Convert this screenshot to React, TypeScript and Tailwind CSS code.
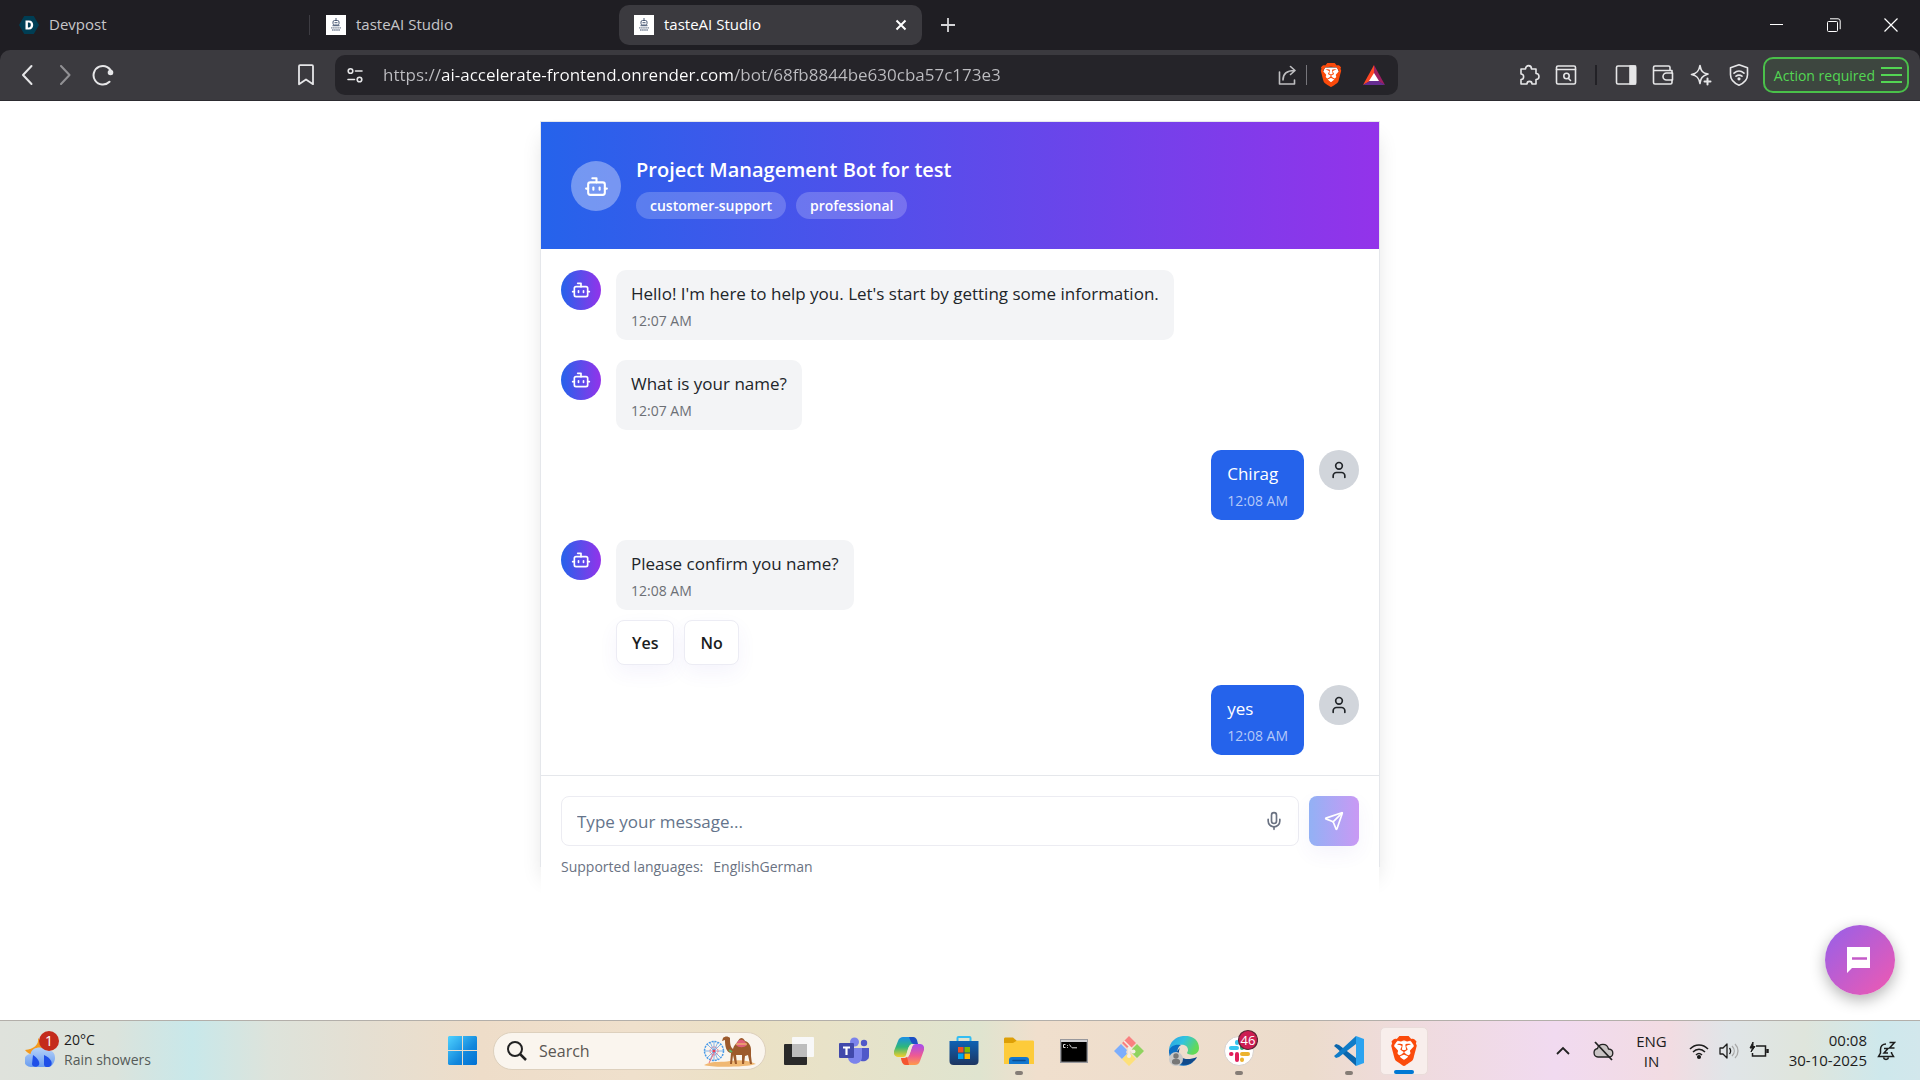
import React, { useState } from 'react';
import { Bot, Mic, Send, User } from 'lucide-react';
import { SiBrave } from 'react-icons/si';

const PAGE_URL = 'https://ai-accelerate-frontend.onrender.com/bot/68fb8844be630cba57c173e3';

interface Message {
    id: number;
    from: 'bot' | 'user';
    text: string;
    time: string;
    options?: string[];
}

const messages: Message[] = [
    { id: 1, from: 'bot', text: "Hello! I'm here to help you. Let's start by getting some information.", time: '12:07 AM' },
    { id: 2, from: 'bot', text: 'What is your name?', time: '12:07 AM' },
    { id: 3, from: 'user', text: 'Chirag', time: '12:08 AM' },
    { id: 4, from: 'bot', text: 'Please confirm you name?', time: '12:08 AM', options: ['Yes', 'No'] },
    { id: 5, from: 'user', text: 'yes', time: '12:08 AM' },
];

/* ---------- Browser icons ---------- */

function DevpostIcon() {
    return (
        <svg className="w-5 h-5 shrink-0" viewBox="0 0 20 20">
            <path d="M5.2 1h9.6L20 10l-5.2 9H5.2L0 10z" fill="#003e54" />
            <path d="M6.5 5.5h3.4c2.8 0 4.3 1.8 4.3 4.5s-1.5 4.5-4.3 4.5H6.5zM8.9 7.6v4.8h.9c1.3 0 2-.8 2-2.4s-.7-2.4-2-2.4z" fill="#fff" />
        </svg>
    );
}

function StudioIcon() {
    return (
        <svg className="w-5 h-5 shrink-0" viewBox="0 0 20 20">
            <rect width="20" height="20" fill="#fff" />
            <g fill="none" stroke="#4b5a75" strokeWidth="1">
                <rect x="7" y="5.5" width="6" height="4.5" rx="1.5" />
                <path d="M10 3v2.500M8.500 7.700h3M6.500 10.700h7" />
            </g>
            <path d="M5 12.800h10M6 15h8" stroke="#7c879a" strokeWidth="1.300" strokeDasharray="1.600 .5" />
        </svg>
    );
}

function BraveIcon({ className }: { className: string }) {
    return (
        <span className={`grid place-items-center ${className}`}>
            <svg className="col-start-1 row-start-1 w-full h-full" viewBox="0 0 24 24">
                <path d="M6 4.5h12l1.8 4-2.4 9L12 21.5l-5.4-4-2.4-9z" fill="#fff" />
            </svg>
            <SiBrave className="col-start-1 row-start-1 w-full h-full text-[#fb4a0b]" />
        </span>
    );
}

interface LineIconProps {
    label: string;
    className?: string;
    children: React.ReactNode;
}

function ToolButton({ label, className = '', children }: LineIconProps) {
    return (
        <button type="button" aria-label={label} className={`shrink-0 text-[#e6e6e8] ${className}`}>
            <svg className="w-[22px] h-[22px]" viewBox="0 0 22 22" fill="none" stroke="currentColor" strokeWidth="1.6" strokeLinecap="round" strokeLinejoin="round">
                {children}
            </svg>
        </button>
    );
}

/* ---------- Browser chrome ---------- */

function TabStrip() {
    return (
        <div className="flex h-[50px] items-center bg-[#1f1e23] text-[15px] leading-5 text-[#c6c6c9]">
            <button type="button" className="flex w-[309px] h-10 items-center gap-[10px] pl-[19px]">
                <DevpostIcon />
                <span className="pb-[2px]">Devpost</span>
            </button>
            <div className="h-5 w-px bg-[#3d3c42]" />
            <button type="button" className="flex w-[309px] h-10 items-center gap-[10px] pl-4">
                <StudioIcon />
                <span className="pb-[2px]">tasteAI Studio</span>
            </button>
            <div className="flex w-[303px] h-10 items-center rounded-[10px] bg-[#3b3a3f] pl-[15px] pr-[13px] text-white">
                <button type="button" className="flex flex-1 items-center gap-[10px]">
                    <StudioIcon />
                    <span className="pb-[2px]">tasteAI Studio</span>
                </button>
                <button type="button" aria-label="Close tab">
                    <svg className="w-4 h-4" viewBox="0 0 16 16" stroke="#fff" strokeWidth="2">
                        <path d="M3.5 3.5l9 9M12.5 3.5l-9 9" />
                    </svg>
                </button>
            </div>
            <button type="button" aria-label="New tab" className="ml-[18px]">
                <svg className="w-4 h-4" viewBox="0 0 16 16" stroke="#d5d5d8" strokeWidth="1.8">
                    <path d="M8 1v14M1 8h14" />
                </svg>
            </button>

            {/* Window controls */}
            <div className="ml-auto flex items-center gap-[43px] pr-[22px]">
                <button type="button" aria-label="Minimize">
                    <svg className="w-[14px] h-[14px]" viewBox="0 0 14 14" stroke="#fff">
                        <path d="M0 6.5h13" />
                    </svg>
                </button>
                <button type="button" aria-label="Restore">
                    <svg className="w-[14px] h-[14px]" viewBox="0 0 14 14" fill="none" stroke="#fff">
                        <rect x=".5" y="3.5" width="10" height="10" rx="1" />
                        <path d="M3 .8h8a2.2 2.2 0 0 1 2.2 2.2v8.2" />
                    </svg>
                </button>
                <button type="button" aria-label="Close window">
                    <svg className="w-[14px] h-[14px]" viewBox="0 0 14 14" stroke="#fff" strokeWidth="1.2">
                        <path d="M.5.5l13 13M13.500.5l-13 13" />
                    </svg>
                </button>
            </div>
        </div>
    );
}

function Toolbar() {
    const [url, setUrl] = useState(PAGE_URL);

    return (
        <div className="bg-[#1f1e23]">
            <div className="flex h-[51px] items-center rounded-t-[10px] border-b border-[#2c2b30] bg-[#3b3a3f]">
                <ToolButton label="Back" className="ml-4">
                    <path d="M15.500 2L7 11l8.500 9" strokeWidth="2" />
                </ToolButton>
                <ToolButton label="Forward" className="ml-4 opacity-50">
                    <path d="M7 2l8.500 9L7 20" strokeWidth="2" />
                </ToolButton>
                <ToolButton label="Reload" className="ml-4">
                    <path d="M20 9.500A9.300 9.300 0 1 0 17.500 17.800" strokeWidth="2" />
                    <circle cx="18.500" cy="8.500" r="2" fill="currentColor" />
                </ToolButton>
                <ToolButton label="Bookmark this page" className="ml-[181px]">
                    <path d="M5 1.200h12a1 1 0 0 1 1 1v18L11 15.500l-7 4.700v-18a1 1 0 0 1 1-1z" strokeWidth="1.800" />
                </ToolButton>

                {/* Address bar */}
                <div className="ml-[18px] flex h-10 min-w-0 flex-1 items-center rounded-[10px] bg-[#252429] pl-[9px] pr-3">
                    <ToolButton label="Site information">
                        <circle cx="6.500" cy="7" r="2.300" />
                        <path d="M11.500 7H18M4 15.500h6.500" />
                        <circle cx="15.500" cy="15.500" r="2.300" />
                    </ToolButton>
                    {/* The host is brighter than the scheme and the path */}
                    <input
                        type="text"
                        aria-label="Address"
                        value={url}
                        onChange={(e) => setUrl(e.target.value)}
                        className="ml-[17px] min-w-0 flex-1 bg-[linear-gradient(90deg,#bdbdc1_58px,#ffffff_58px,#ffffff_351px,#bdbdc1_351px)] bg-clip-text text-[17px] text-transparent outline-none"
                    />
                    <ToolButton label="Share" className="opacity-80">
                        <path d="M3.500 8v12h15v-4" />
                        <path d="M7 16c0-6 4-9.500 11.500-9.500M14.500 2.500l4.500 4-4.500 4" />
                    </ToolButton>
                    <div className="ml-2 h-5 w-px bg-[#77767b]" />
                    <button type="button" aria-label="Brave Shields" className="ml-3">
                        <BraveIcon className="w-6 h-6" />
                    </button>
                    <button type="button" aria-label="Brave Rewards" className="ml-[19px]">
                        <svg className="w-6 h-6" viewBox="0 0 24 24">
                            <path d="M12 2L1 22l7.500-4L12 11z" fill="#ff4724" />
                            <path d="M12 2l11 20-7.500-4L12 11z" fill="#9e1f63" />
                            <path d="M1 22h22l-7.500-4.500h-7z" fill="#662d91" />
                            <path d="M12 10l5 8H7z" fill="#fff" />
                        </svg>
                    </button>
                </div>

                {/* Extensions and side panels */}
                <div className="ml-[120px] flex items-center">
                    <ToolButton label="Extensions">
                        <path d="M3 5h4.500c0-4.500 6-4.500 6 0H18v4.500c4 0 4 6 0 6V20h-4c0-3.500-5-3.500-5 0H3v-4.500c3.500 0 3.500-5.500 0-5.500z" />
                    </ToolButton>
                    <ToolButton label="Search page" className="ml-[15px]">
                        <rect x="1.500" y="2" width="19" height="18" rx="1.500" />
                        <path d="M1.500 5.500h19M13.500 14.500l2 2" />
                        <circle cx="11.500" cy="12" r="2.700" />
                    </ToolButton>
                    <div className="mx-[18px] h-5 w-[2px] bg-[#222126]" />
                    <ToolButton label="Side panel">
                        <rect x="1.500" y="2" width="19" height="18" rx="1.500" />
                        <path d="M15 2h5.500v18H15z" fill="currentColor" />
                    </ToolButton>
                    <ToolButton label="Wallet" className="ml-[15px]">
                        <path d="M20 9V6.500H1.500M18 6V3.500a1.500 1.500 0 0 0-1.500-1.500H3a1.500 1.500 0 0 0-1.500 1.500v15A1.500 1.500 0 0 0 3 20h15.500a1.500 1.500 0 0 0 1.500-1.500V16" />
                        <path d="M20.500 9h-6a3.500 3.500 0 0 0 0 7h6z" />
                    </ToolButton>
                    <ToolButton label="Leo AI" className="ml-4">
                        <path d="M10 1.500c1 5.500 2.500 7.500 8 8.500-2.500.8-4.500 1.500-6 3.500s-1.500 3.500-2 6c-1-5.500-3-8-8.500-9 5.500-1 7.500-3.500 8.500-9z" />
                        <path d="M17.500 14.500v6M14.500 17.500h6" strokeWidth="2" />
                    </ToolButton>
                    <ToolButton label="VPN" className="ml-4">
                        <path d="M11 .8l8.500 3v7c0 5-4 8.500-8.500 10.400C6.500 19.300 2.500 15.800 2.500 10.800v-7z" />
                        <path d="M6 9.200c3-2.600 7-2.600 10 0M8 12.200c2-1.500 4-1.500 6 0" />
                        <circle cx="11" cy="14.800" r=".8" fill="currentColor" />
                    </ToolButton>
                    <button
                        type="button"
                        className="ml-[13px] mr-[11px] flex h-9 items-center gap-[6px] rounded-[10px] border-2 border-[#4ac04a] bg-[#3d463f] pl-[9px] pr-[5px] text-[14px] whitespace-nowrap text-[#53d653]"
                    >
                        Action required
                        <svg className="w-[21px] h-[18px]" viewBox="0 0 21 18" stroke="currentColor" strokeWidth="2">
                            <path d="M0 2h21M0 9h21M0 16h21" />
                        </svg>
                    </button>
                </div>
            </div>
        </div>
    );
}

/* ---------- Chat ---------- */

function ChatMessage({ message }: { message: Message }) {
    if (message.from === 'user') {
        return (
            <div className="flex items-start justify-end gap-[15px]">
                <div className="rounded-[10px] bg-[#2563eb] px-4 pt-3 pb-[9px] text-white">
                    <p className="text-[17px] leading-6">{message.text}</p>
                    <p className="mt-[5px] text-[14px] leading-5 text-[#b5c9f8]">{message.time}</p>
                </div>
                <div className="flex w-10 h-10 shrink-0 items-center justify-center rounded-full bg-[#d1d5db]">
                    <User className="w-5 h-5 text-[#212529]" />
                </div>
            </div>
        );
    }

    return (
        <div className="flex items-start gap-[15px]">
            <div className="flex w-10 h-10 shrink-0 items-center justify-center rounded-full bg-[linear-gradient(90deg,#2563eb,#9333ea)]">
                <Bot className="w-5 h-5 text-white" />
            </div>
            <div>
                <div className="w-fit rounded-[10px] bg-[#f3f4f6] px-[15px] pt-3 pb-[9px]">
                    <p className="text-[17px] leading-6 text-[#212529]">{message.text}</p>
                    <p className="mt-[5px] text-[14px] leading-5 text-[#6c6f75]">{message.time}</p>
                </div>
                {message.options && (
                    <div className="mt-[10px] flex gap-[10px]">
                        {message.options.map((option) => (
                            <button
                                key={option}
                                type="button"
                                className="h-[45px] rounded-[8px] border border-[#ececf4] bg-white px-[15px] text-[16px] font-semibold text-[#1a1d21] shadow-[0_8px_20px_rgba(80,60,200,0.06)]"
                            >
                                {option}
                            </button>
                        ))}
                    </div>
                )}
            </div>
        </div>
    );
}

function ChatCard() {
    const [text, setText] = useState('');

    return (
        <div className="mx-auto w-full max-w-[840px] border border-gray-200 bg-white shadow-[0_14px_20px_-3px_rgba(0,0,0,0.12)]">
            {/* Header */}
            <header className="flex items-center gap-[15px] bg-[linear-gradient(90deg,#2563eb,#9333ea)] px-[30px] pt-[31px] pb-[30px] text-white">
                <div className="flex w-[50px] h-[50px] shrink-0 items-center justify-center rounded-full bg-white/35">
                    <Bot className="w-[25px] h-[25px]" />
                </div>
                <div>
                    <h1 className="text-[20px] leading-[34px] font-semibold">Project Management Bot for test</h1>
                    <div className="mt-[5px] flex gap-[10px]">
                        <span className="rounded-full bg-white/20 px-[14px] pt-px text-[14px] leading-[26px] font-semibold">customer-support</span>
                        <span className="rounded-full bg-white/20 px-[14px] pt-px text-[14px] leading-[26px] font-semibold">professional</span>
                    </div>
                </div>
            </header>

            {/* Conversation */}
            <div className="flex flex-col gap-5 px-5 pt-[21px] pb-5">
                {messages.map((message) => (
                    <ChatMessage key={message.id} message={message} />
                ))}
            </div>

            {/* Composer, runs past the bottom edge of the card */}
            <form onSubmit={(e) => e.preventDefault()} className="-mb-8 border-t border-gray-200 bg-white px-5 pt-5 pb-5">
                <div className="flex gap-[10px]">
                    <div className="flex h-[50px] min-w-0 flex-1 items-center rounded-[8px] border border-[#ececf2] pl-[15px] pr-[14px]">
                        <input
                            type="text"
                            aria-label="Message"
                            value={text}
                            onChange={(e) => setText(e.target.value)}
                            placeholder="Type your message..."
                            className="min-w-0 flex-1 pt-[2px] text-[17px] text-gray-800 outline-none placeholder:text-[#64748b]"
                        />
                        <button type="button" aria-label="Voice input">
                            <Mic className="w-5 h-5 text-gray-500" />
                        </button>
                    </div>
                    <button
                        type="submit"
                        aria-label="Send"
                        className="flex w-[50px] h-[50px] shrink-0 items-center justify-center rounded-[8px] bg-[linear-gradient(90deg,#92b1f5,#c999f4)] text-white shadow-[0_8px_20px_rgba(80,60,200,0.06)]"
                    >
                        <Send className="w-5 h-5" />
                    </button>
                </div>
                <p className="mt-[10px] flex gap-[10px] text-[14px] leading-[22px] text-gray-500">
                    <span>Supported languages:</span>
                    <span>EnglishGerman</span>
                </p>
            </form>
        </div>
    );
}

/* ---------- Taskbar ---------- */

function WeatherIcon() {
    return (
        <svg className="w-[34px] h-10 shrink-0" viewBox="0 0 34 40">
            <defs>
                <linearGradient id="cloud" x1="0" y1="0" x2="0" y2="1">
                    <stop offset="0" stopColor="#b6d2f8" />
                    <stop offset="1" stopColor="#6a9df0" />
                </linearGradient>
            </defs>
            <path d="M13 7c1 7-4 11-13 12 3 4 8 6 13 4 6-2 7-10 0-16z" fill="#f39a1e" />
            <path d="M6 36a6.500 6.500 0 0 1-.5-13C7 15 19 15 22 20c6-1 8 3 8 7s-3 9-7 9z" fill="url(#cloud)" />
            <path d="M8 24c6 4 7 8 6 10-2 3-7 2-7-1zM19 24c7 3 9 8 7 10.500s-7 2-7-1z" fill="#1f4fe8" />
            <circle cx="24" cy="10" r="10" fill="#c42b1c" />
            <text x="24" y="15" textAnchor="middle" fontSize="14" fill="#fff">1</text>
        </svg>
    );
}

function StartIcon() {
    return (
        <svg className="w-[29px] h-[29px]" viewBox="0 0 29 29">
            <defs>
                <linearGradient id="win" x1="0" y1="0" x2="1" y2="1">
                    <stop offset="0" stopColor="#4fd2ff" />
                    <stop offset=".6" stopColor="#1287dc" />
                    <stop offset="1" stopColor="#0071d4" />
                </linearGradient>
            </defs>
            <path d="M1 0h13v14H0V1zM15 0h13l1 1v13H15zM0 15h14v14H1l-1-1zM15 15h14v13l-1 1H15z" fill="url(#win)" />
        </svg>
    );
}

function CamelArt() {
    return (
        <svg className="w-[54px] h-8 shrink-0" viewBox="0 0 54 32">
            <path d="M1 30c10-5 18-2 26-4 10-2 20 0 26 3-8 3-45 4-52 1z" fill="#f0b873" />
            <g stroke="#4b9be8" fill="none">
                <circle cx="11" cy="16" r="9.500" strokeDasharray="2 1" strokeWidth="1.500" />
                <path d="M11 6v20M1 16h20M4 9l14 14M18 9L4 23M7 7l8 18M15 7L7 25" strokeWidth=".7" />
            </g>
            <circle cx="11" cy="16" r="4" fill="none" stroke="#ef6a7f" strokeDasharray="1.500 1" />
            <circle cx="11" cy="16" r="1.600" fill="#e8405a" />
            <path d="M11 18l-5 10" stroke="#ef6a7f" />
            <path d="M20 3c2-2 5-2 7 0 0 4 0 9 3 11 1-4 3-5 5-8 2-4 5-4 7 0 4 1 6 5 6 9v6l1 8h-2l-2-9-3 1-1 8h-2v-9h-6l1 9h-2l-2-9-1 9h-2l1-11c-5-1-6-7-6-13l-3 1z" fill="#9c5a2c" />
            <path d="M33 10c2-7 8-7 11 0-3 3-8 3-11 0z" fill="#e0607a" />
            <path d="M33 9l11 0" stroke="#f5cf6a" />
            <path d="M26 15l3 2" stroke="#5bb56a" strokeWidth="2" />
        </svg>
    );
}

function TaskViewIcon() {
    return (
        <svg className="w-[30px] h-[30px]" viewBox="0 0 30 30">
            <rect x="0" y="8" width="23" height="21" rx="1" fill="#2a2a2a" />
            <rect x="8" y="1" width="22" height="20" rx="1" fill="#f8f8f8" />
            <path d="M8 8h15v13H8z" fill="#bdbdbd" />
        </svg>
    );
}

function TeamsIcon() {
    return (
        <svg className="w-[30px] h-[30px]" viewBox="0 0 30 30">
            <circle cx="15.500" cy="6" r="4.500" fill="#7b83eb" />
            <circle cx="25" cy="7" r="3.200" fill="#5059c9" />
            <path d="M21 12h9v8c0 4-4 6-8 5z" fill="#5059c9" />
            <path d="M9 12h14v9c0 9-14 9-14 0z" fill="#7b83eb" />
            <rect x="0" y="7" width="15" height="15" rx="1" fill="#4149ab" />
            <path d="M4 10.500h7v2H8.600V19H6.400v-6.500H4z" fill="#fff" />
        </svg>
    );
}

function CopilotIcon() {
    return (
        <svg className="w-[30px] h-[30px]" viewBox="0 0 30 30">
            <defs>
                <linearGradient id="cpA" x1="0" y1="0" x2="0" y2="1">
                    <stop offset="0" stopColor="#1b8fe6" />
                    <stop offset=".5" stopColor="#2fb77a" />
                    <stop offset="1" stopColor="#f5cf2a" />
                </linearGradient>
                <linearGradient id="cpB" x1="0" y1="0" x2="0" y2="1">
                    <stop offset="0" stopColor="#a44cf0" />
                    <stop offset=".55" stopColor="#ee5a93" />
                    <stop offset="1" stopColor="#ff9b4a" />
                </linearGradient>
            </defs>
            <path d="M9 1h9c2 0 3 1 4 3l1 4h-4c-3 0-4 2-5 5l-2 6c-1 2-2 2-4 2H4c-3 0-5-3-4-6L4 5c1-3 3-4 5-4z" fill="url(#cpA)" />
            <path d="M15 1h4c2 0 3 1 4 3l1 4h-5l-2-2z" fill="#1b4fc4" />
            <path d="M21 29h-9c-2 0-3-1-4-3l-1-4h4c3 0 4-2 5-5l2-6c1-2 2-3 4-3h4c3 0 5 3 4 6l-4 11c-1 3-3 4-5 4z" fill="url(#cpB)" />
            <path d="M7 22h4l2-1 2 8h-3c-2 0-3-1-4-3z" fill="#f4552f" />
            <path d="M14 13c1-3 2-5 5-5l-3 9c-1 3-2 4-4 4z" fill="#f2e7d0" />
        </svg>
    );
}

function StoreIcon() {
    return (
        <svg className="w-[30px] h-[30px]" viewBox="0 0 30 30">
            <defs>
                <linearGradient id="store" x1="0" y1="0" x2="0" y2="1">
                    <stop offset="0" stopColor="#0e62b4" />
                    <stop offset="1" stopColor="#1d3561" />
                </linearGradient>
            </defs>
            <path d="M8.500 6V2c0-.6.400-1 1-1h11c.6 0 1 .4 1 1v4" fill="none" stroke="#33bdf2" strokeWidth="2" />
            <path d="M.500 5h29v20a4 4 0 0 1-4 4h-21a4 4 0 0 1-4-4z" fill="url(#store)" />
            <path d="M9 11h5.500v5.500H9z" fill="#f25022" />
            <path d="M15.500 11H21v5.500h-5.500z" fill="#7fba00" />
            <path d="M9 17.500h5.500V23H9z" fill="#00a4ef" />
            <path d="M15.500 17.500H21V23h-5.500z" fill="#ffb900" />
        </svg>
    );
}

function ExplorerIcon() {
    return (
        <svg className="w-[30px] h-[30px]" viewBox="0 0 30 30">
            <path d="M0 3c0-1 .5-1.500 1.500-1.500H9L13 5v6H0z" fill="#dd9f07" />
            <path d="M0 7h9l4-2.500h15.500c1 0 1.500.5 1.500 1.500v22H0z" fill="#fdcb3a" />
            <path d="M5 28v-4c0-2 1-3 3-3h14c2 0 3 1 3 3v4z" fill="#1277cf" />
            <path d="M9 24.500h12" stroke="#0b4d92" strokeWidth="1.500" strokeLinecap="round" />
        </svg>
    );
}

function TerminalIcon() {
    return (
        <svg className="w-[28px] h-[24px]" viewBox="0 0 28 24">
            <rect x=".7" y=".7" width="26.600" height="22.600" fill="#000" stroke="#98989c" strokeWidth="1.400" />
            <path d="M1 2h26" stroke="#cfcfd2" strokeWidth="2" />
            <path d="M5.500 5.500H3.500v3h2M7.500 6v.8M7.500 8v.8M9.500 5.500l2 3M12 8.800h5" stroke="#d8d8d8" fill="none" />
        </svg>
    );
}

function GitIcon() {
    return (
        <svg className="w-[30px] h-[30px]" viewBox="0 0 30 30">
            <path d="M15 0l7 7-5 5-2-2-2 2-5-5z" fill="#f98080" />
            <path d="M7 8l6 6-1 2 1 2-5 5-8-8z" fill="#7daefc" />
            <path d="M23 8l7 7-7 7-5-5 1-2-1-2z" fill="#8fd35f" />
            <path d="M15 19l2-1 5 5-7 7-7-7 5-5z" fill="#fde07a" />
            <path d="M10 5l8 8M15 11v10M15 13l4 3" stroke="#f5eee6" strokeWidth="1.500" />
            <circle cx="15" cy="20" r="2" fill="#f5eee6" />
            <circle cx="19.500" cy="15.500" r="2" fill="#f5eee6" />
        </svg>
    );
}

function EdgeIcon() {
    return (
        <svg className="w-[30px] h-[30px]" viewBox="0 0 30 30">
            <defs>
                <linearGradient id="edge" x1="0" y1="0" x2="1" y2=".4">
                    <stop offset="0" stopColor="#2b9ee6" />
                    <stop offset=".5" stopColor="#31c3df" />
                    <stop offset="1" stopColor="#63d957" />
                </linearGradient>
            </defs>
            <path d="M0 14C1-4 30-5 30 12c0 6-6 8-11 6-2-1 0-2 0-4 0-5-5-6-9-5-5 1-10 4-10 5z" fill="url(#edge)" />
            <path d="M0 14c2-5 8-6 12-5-5 3-5 11 0 15 3 3 8 3 12 2-8 8-25 3-24-12z" fill="#0c6fc4" />
            <path d="M11 12c-4 7 3 15 17 9-3 7-13 10-18 6-5-5-3-12 1-15z" fill="#114a8b" />
            <circle cx="7" cy="23" r="7" fill="#c9c9c9" />
            <circle cx="7" cy="20" r="2.700" fill="#777" />
            <path d="M3 25c0-3 8-3 8 0v2c-2 2-6 2-8 0z" fill="#777" />
        </svg>
    );
}

function SlackIcon() {
    return (
        <svg className="w-[38px] h-[44px]" viewBox="0 0 38 44">
            <circle cx="19" cy="22" r="14.500" fill="#fff" stroke="#d8d1cc" />
            <g strokeWidth="4" strokeLinecap="round">
                <path d="M11 19h6M17 13v1" stroke="#36c5f0" />
                <path d="M22 13v6M27 19h.5" stroke="#2eb67d" />
                <path d="M17 25v6M11 25h.5" stroke="#e01e5a" />
                <path d="M22 25h6M22 31v-.5" stroke="#ecb22e" />
            </g>
            <circle cx="28" cy="11" r="9.500" fill="#cd1d52" stroke="#5a2433" strokeWidth="1.200" />
            <text x="28" y="16" textAnchor="middle" fontSize="13" fill="#fff">46</text>
        </svg>
    );
}

function VsCodeIcon() {
    return (
        <svg className="w-[30px] h-[30px]" viewBox="0 0 30 30">
            <path d="M22 30L3 12.500l-3-2.500 2-2 3 1L22 22z" fill="#0a66ad" />
            <path d="M22 0L3 17.500l-3 2.500 2 2 3-1L22 8z" fill="#0f7cc8" />
            <path d="M22 0l8 3v24l-8 3z" fill="#2ba3f0" />
        </svg>
    );
}

interface TaskbarAppProps {
    label: string;
    running?: boolean;
    active?: boolean;
    children: React.ReactNode;
}

function TaskbarApp({ label, running, active, children }: TaskbarAppProps) {
    return (
        <button
            type="button"
            aria-label={label}
            className={`relative flex w-12 h-12 shrink-0 items-center justify-center rounded-[5px] ${
                active ? 'border border-[#eadcda] bg-[#f8eeec]' : ''
            }`}
        >
            {children}
            {running && (
                <span className={`absolute bottom-0 left-1/2 h-1 -translate-x-1/2 rounded-full ${active ? 'w-5 bg-[#0078d4]' : 'w-2 bg-[#857d76]'}`} />
            )}
        </button>
    );
}

function Taskbar() {
    return (
        <footer className="flex h-[60px] items-center border-t border-[#b3afaa] bg-[linear-gradient(90deg,#dfe2dc_0%,#dbe3dc_6%,#c8e8ea_10%,#dde3db_14%,#e5dfd2_19%,#eeddc9_25%,#efe0cc_33%,#ebe1c5_39%,#e8e2c8_43%,#dfe4cf_51%,#f0dfcd_54%,#ecdccc_68%,#efdbdc_73%,#f1daf0_81%,#f2dce2_87%,#e0e5e8_90%,#dfe5dc_94%,#cee8ec_98%,#d2e7ec_100%)] text-[15px] leading-5 text-[#1c1c1c]">
            {/* Weather */}
            <div className="flex flex-1 items-center">
                <button type="button" className="ml-[25px] flex items-center gap-[5px] text-left">
                    <WeatherIcon />
                    <span className="pb-[2px] text-[14px]">
                        <span className="block">20°C</span>
                        <span className="block text-[#555b58]">Rain showers</span>
                    </span>
                </button>
            </div>

            {/* Pinned apps */}
            <div className="mr-[30px] flex items-center gap-[7px]">
                <TaskbarApp label="Start"><StartIcon /></TaskbarApp>
                <label className="mr-[2px] flex h-[38px] w-[273px] items-center rounded-full border border-[#ddd0bd] bg-[#faf5ee] pl-[13px] pr-2">
                    <svg className="w-[20px] h-[20px] shrink-0" viewBox="0 0 20 20" fill="none" stroke="#222" strokeWidth="2">
                        <circle cx="8" cy="8" r="7" />
                        <path d="M13 13l6 6" strokeWidth="2.500" />
                    </svg>
                    <input type="text" aria-label="Search" placeholder="Search" className="ml-3 min-w-0 flex-1 text-[16px] outline-none placeholder:text-[#5b5753]" />
                    <CamelArt />
                </label>
                <TaskbarApp label="Task view"><TaskViewIcon /></TaskbarApp>
                <TaskbarApp label="Teams"><TeamsIcon /></TaskbarApp>
                <TaskbarApp label="Copilot"><CopilotIcon /></TaskbarApp>
                <TaskbarApp label="Microsoft Store"><StoreIcon /></TaskbarApp>
                <TaskbarApp label="File Explorer" running><ExplorerIcon /></TaskbarApp>
                <TaskbarApp label="Command Prompt"><TerminalIcon /></TaskbarApp>
                <TaskbarApp label="Git"><GitIcon /></TaskbarApp>
                <TaskbarApp label="Edge"><EdgeIcon /></TaskbarApp>
                <TaskbarApp label="Slack" running><SlackIcon /></TaskbarApp>
                <div className="w-12" />
                <TaskbarApp label="Visual Studio Code" running><VsCodeIcon /></TaskbarApp>
                <TaskbarApp label="Brave" running active><BraveIcon className="w-[30px] h-[30px]" /></TaskbarApp>
            </div>

            {/* System tray */}
            <div className="flex flex-1 items-center justify-end pr-[24px] text-[15px]">
                <button type="button" aria-label="Show hidden icons">
                    <svg className="w-[14px] h-[14px]" viewBox="0 0 14 14" fill="none" stroke="#222" strokeWidth="1.800">
                        <path d="M1 10l6-6 6 6" />
                    </svg>
                </button>
                <button type="button" aria-label="OneDrive" className="ml-[23px]">
                    <svg className="w-[21px] h-[20px]" viewBox="0 0 21 20" stroke="#222" strokeWidth="1.300">
                        <path d="M5 16a4.300 4.300 0 0 1-.5-8.500C6 2 14 2 15.500 8c6 .5 5.500 8 0 8z" fill="#c9c4c4" />
                        <path d="M2 1l17 18" strokeWidth="1.800" />
                    </svg>
                </button>
                <button type="button" className="ml-[22px] text-center">
                    <span className="block">ENG</span>
                    <span className="block">IN</span>
                </button>
                <button type="button" aria-label="Network, volume and battery" className="ml-[22px] flex gap-[10px]">
                    <svg className="w-5 h-5" viewBox="0 0 20 20" fill="none" stroke="#1c1c1c" strokeWidth="1.500">
                        <path d="M1 8c5-5.500 13-5.500 18 0M4 11c3.500-3.700 8.500-3.700 12 0M7 14c2-2 4-2 6 0" />
                        <circle cx="10" cy="16" r="1.300" fill="#1c1c1c" />
                    </svg>
                    <svg className="w-5 h-5" viewBox="0 0 20 20" fill="none" stroke="#1c1c1c" strokeWidth="1.300">
                        <path d="M1 7h3l4-4v14l-4-4H1z" strokeLinejoin="round" />
                        <path d="M10.500 7c1.500 2 1.500 4 0 6" />
                        <path d="M13 5c3 3 3 7 0 10M16 3c4 4 4 10 0 14" stroke="#a9a9a9" />
                    </svg>
                    <svg className="w-5 h-5" viewBox="0 0 20 20" fill="none" stroke="#1c1c1c" strokeWidth="1.500">
                        <path d="M7 5h9.500v10H3.500v-3" />
                        <path d="M18.500 8v4" strokeWidth="2.500" />
                        <path d="M4 1L1 7h2.500L2 11l4-5.500H4z" fill="#1c1c1c" strokeWidth="1" />
                    </svg>
                </button>
                <button type="button" className="ml-5 flex items-center gap-[10px]">
                    <span className="pb-[2px] text-right">
                        <span className="block">00:08</span>
                        <span className="block">30-10-2025</span>
                    </span>
                    <svg className="w-[19px] h-[20px]" viewBox="0 0 19 20" fill="none" stroke="#1c1c1c" strokeWidth="1.500">
                        <path d="M9 3c-3.500 0-5.500 2.500-5.500 5.500V12L1.500 15.500h15L14.500 12v-1M6.500 16.500c.5 2.500 4.500 2.500 5 0" />
                        <path d="M12.500 1.500h5l-5 5.500h5M7 7.500h4L7 12h4" />
                    </svg>
                </button>
            </div>
        </footer>
    );
}

export default function App() {
    return (
        <div className="flex min-h-screen flex-col bg-white font-['Open_Sans','Noto_Sans',sans-serif]">
            <TabStrip />
            <Toolbar />
            <main className="flex-1 px-5 pt-5 pb-8">
                <ChatCard />
            </main>

            {/* Floating help button */}
            <button
                type="button"
                aria-label="Open support chat"
                className="fixed right-[25px] bottom-[85px] flex w-[70px] h-[70px] items-center justify-center rounded-full bg-[linear-gradient(135deg,#9560ea,#f159b0)] shadow-[0_5px_15px_rgba(0,0,0,0.3)]"
            >
                <svg className="w-[30px] h-[30px]" viewBox="0 0 30 30">
                    <path d="M2 2h23v21H7l-5 5z" fill="#fff" />
                    <path d="M7 13.500h15" stroke="#c45ac8" strokeWidth="2.500" />
                </svg>
            </button>
            <Taskbar />
        </div>
    );
}
